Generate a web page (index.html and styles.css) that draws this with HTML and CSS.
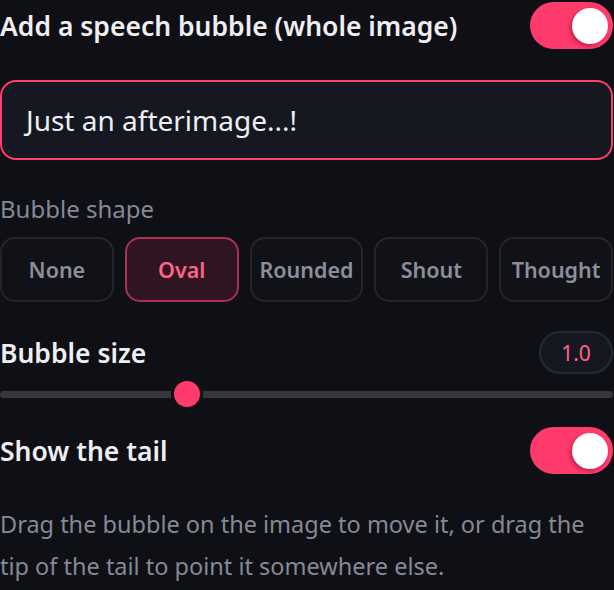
FILE: index.html
```html
<!DOCTYPE html>
<html lang="en">
<head>
<meta charset="utf-8">
<title>Speech bubble</title>
<link rel="stylesheet" href="styles.css">
</head>
<body>
<div class="panel">
  <div class="row row-title">
    <span class="title">Add a speech bubble (whole image)</span>
    <span class="toggle on"><span class="knob"></span></span>
  </div>
  <div class="text-input">Just an afterimage...!</div>
  <div class="label">Bubble shape</div>
  <div class="shapes">
    <button class="shape">None</button>
    <button class="shape active">Oval</button>
    <button class="shape">Rounded</button>
    <button class="shape">Shout</button>
    <button class="shape">Thought</button>
  </div>
  <div class="row row-size">
    <span class="title">Bubble size</span>
    <span class="pill">1.0</span>
  </div>
  <div class="slider">
    <div class="track"></div>
    <div class="thumb" style="left: 187px"></div>
  </div>
  <div class="row row-tail">
    <span class="title">Show the tail</span>
    <span class="toggle on"><span class="knob"></span></span>
  </div>
  <p class="hint">Drag the bubble on the image to move it, or drag the tip of the tail to point it somewhere else.</p>
</div>
</body>
</html>
```
FILE: styles.css
```css
html, body {
  margin: 0;
  padding: 0;
  background: #0f1015;
}
body {
  font-family: "Noto Sans", "Open Sans", sans-serif;
  color: #eeeef3;
  width: 614px;
  height: 590px;
  overflow: hidden;
}
.panel {
  display: flex;
  flex-direction: column;
  width: 613px;
}
.row {
  display: flex;
  justify-content: space-between;
  align-items: center;
}
.row-title {
  height: 51px;
}
.title {
  font-size: 26.5px;
  font-weight: 600;
  color: #eeeef3;
  line-height: 32px;
}
.toggle {
  width: 83px;
  height: 47px;
  border-radius: 24px;
  background: #ff3b6b;
  display: flex;
  align-items: center;
  justify-content: flex-end;
  padding-right: 5px;
  box-sizing: border-box;
}
.knob {
  width: 36px;
  height: 36px;
  border-radius: 50%;
  background: #ffffff;
  box-shadow: -2px 2px 4px rgba(120, 0, 30, 0.45);
}
.text-input {
  margin-top: 29px;
  height: 80px;
  box-sizing: border-box;
  border: 2px solid #ff3d6e;
  border-radius: 16px;
  background: #151821;
  display: flex;
  align-items: center;
  padding-left: 24px;
  font-size: 28px;
  color: #eeeef3;
}
.label {
  margin-top: 34px;
  font-size: 24px;
  color: #858995;
  line-height: 30px;
}
.shapes {
  margin-top: 13px;
  display: grid;
  grid-template-columns: repeat(5, 1fr);
  gap: 11px;
}
.shape {
  height: 65px;
  border: 2px solid #24262c;
  border-radius: 15px;
  background: #111217;
  color: #8c8f9b;
  font-family: inherit;
  font-size: 21.5px;
  font-weight: 600;
  padding: 0;
}
.shape.active {
  border-color: #a8324f;
  background: #2e1521;
  color: #ff638c;
}
.row-size {
  margin-top: 29px;
  height: 43px;
}
.pill {
  width: 74px;
  height: 43px;
  box-sizing: border-box;
  border: 2px solid #272a31;
  border-radius: 22px;
  background: #151820;
  color: #ff638c;
  font-size: 21px;
  display: flex;
  align-items: center;
  justify-content: center;
}
.slider {
  position: relative;
  margin-top: 7px;
  height: 26px;
  display: flex;
  align-items: center;
}
.track {
  width: 100%;
  height: 7px;
  border-radius: 4px;
  background: #36373d;
}
.thumb {
  position: absolute;
  top: 0;
  width: 26px;
  height: 26px;
  margin-left: -13px;
  border-radius: 50%;
  background: #ff3b6b;
  box-shadow: 0 0 0 3px #0f1015;
}
.row-tail {
  margin-top: 20px;
  height: 47px;
}
.hint {
  margin: 29px 0 0;
  font-size: 23.5px;
  line-height: 42px;
  color: #858995;
}
```
